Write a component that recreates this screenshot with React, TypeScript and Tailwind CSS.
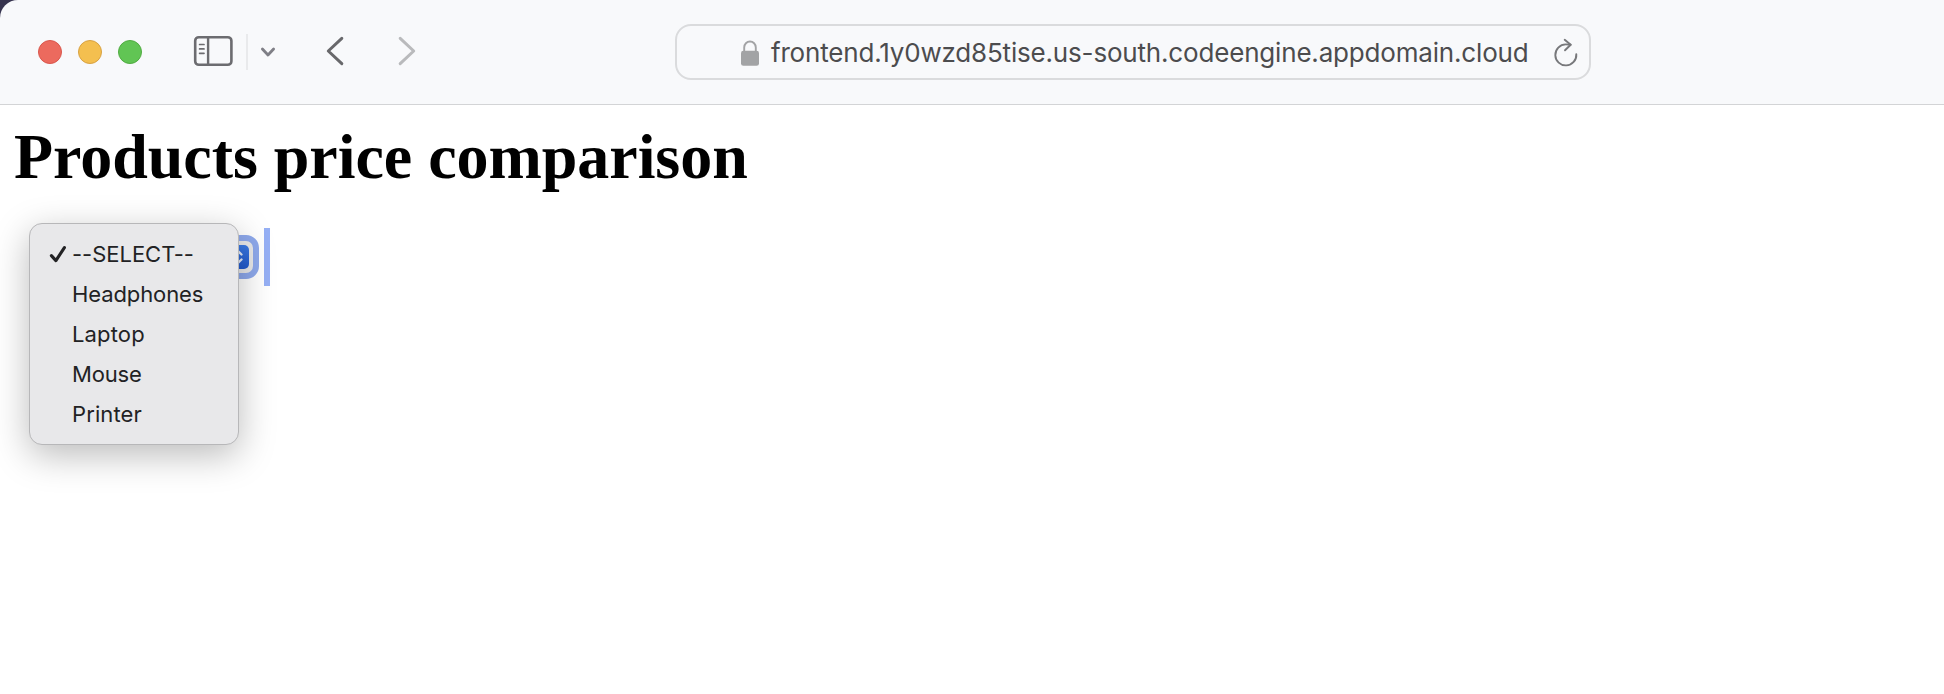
import React from "react";

type Option = { label: string; tracking: string };

const OPTIONS: Option[] = [
  { label: "--SELECT--", tracking: "tracking-[-0.02px]" },
  { label: "Headphones", tracking: "tracking-[-0.1px]" },
  { label: "Laptop", tracking: "tracking-[0.15px]" },
  { label: "Mouse", tracking: "tracking-[-0.2px]" },
  { label: "Printer", tracking: "tracking-[0.1px]" },
];

function WindowControls() {
  return (
    <div className="flex gap-4">
      <span className="size-6 rounded-full border border-[#d9574d] bg-[#ec6a5e]" />
      <span className="size-6 rounded-full border border-[#d8a243] bg-[#f4bf4f]" />
      <span className="size-6 rounded-full border border-[#51ac42] bg-[#61c554]" />
    </div>
  );
}

function SidebarIcon() {
  return (
    <svg className="mt-[-2px] ml-[51px] block" width="41" height="32" viewBox="0 0 41 32" fill="none" stroke="#6c6c70">
      <rect x="2.2" y="2.2" width="36.2" height="27.6" rx="3.6" strokeWidth="2.6" />
      <path d="M15.1 2.5V30" strokeWidth="2.4" />
      <path d="M6.6 9.5h4.4M6.6 13.9h4.4M6.6 18.3h4.4" strokeWidth="1.7" strokeLinecap="round" />
    </svg>
  );
}

function Toolbar() {
  return (
    <header className="flex h-[105px] items-start rounded-tl-[18px] border-b border-[#d3d4d6] bg-[#f8f9fb] pl-[38px]">
      <div className="flex h-[104px] items-center">
        <WindowControls />
        <SidebarIcon />
        <span className="ml-[12px] h-9 w-0.5 bg-[#e9eaec]" />
        <svg className="mt-[-1px] ml-[12px] block" width="16" height="12" viewBox="0 0 16 12" fill="none">
          <path d="M2.4 3 8 9l5.6-6" stroke="#7f7f86" strokeWidth="2.8" strokeLinecap="round" strokeLinejoin="round" />
        </svg>
        <svg className="ml-[49px] block" width="20" height="32" viewBox="0 0 20 32" fill="none">
          <path d="M16.8 2.3 3.3 15l13.5 12.7" stroke="#68686b" strokeWidth="3" strokeLinecap="round" strokeLinejoin="round" />
        </svg>
        <svg className="ml-[52px] block" width="20" height="32" viewBox="0 0 20 32" fill="none">
          <path d="M3.2 2.3 16.7 15 3.2 27.7" stroke="#b9babc" strokeWidth="3" strokeLinecap="round" strokeLinejoin="round" />
        </svg>
      </div>
      <div className="mt-6 ml-[258px] flex h-14 w-[916px] items-start rounded-[16px] border-2 border-[#dadbdd]">
        <svg className="mt-[14px] ml-[64px] block" width="18" height="27" viewBox="0 0 18 27" fill="none">
          <path d="M3.2 12V7.5a5.8 6 0 0 1 11.6 0V12" stroke="#a2a3a5" strokeWidth="1.9" />
          <rect x="0" y="10.8" width="18" height="15" rx="2.4" fill="#a2a3a5" />
        </svg>
        <span className="ml-[12px] w-[759px] whitespace-nowrap pt-[9px] font-['Inter',sans-serif] text-[26px] leading-[36px] tracking-[-0.18px] text-[#4c4c4e]">
          frontend.1y0wzd85tise.us-south.codeengine.appdomain.cloud
        </span>
        <svg className="mt-[11px] ml-[23px] block shrink-0" width="26" height="30" viewBox="0 0 26 30" fill="none" stroke="#77787b" strokeWidth="1.9" strokeLinecap="round" strokeLinejoin="round">
          <path d="M23.3 17.2A10.5 10.5 0 1 1 12.8 7.4c1.7 0 3.2 0 4.8.3" />
          <path d="m11.7 2.8 6 4.9-5.7 5.6" />
        </svg>
      </div>
    </header>
  );
}

function ClosedSelect() {
  return (
    <div className="ml-[30px] flex h-[58px] w-[240px] items-center justify-between border-r-[6px] border-[#96b0f5]">
      <div className="flex h-11 w-[229px] items-center justify-end rounded-[13px] border-[6px] border-[#8ea9ec] bg-[#e9e9ea] pr-1">
        <svg className="block" width="24" height="24" viewBox="0 0 24 24" fill="none">
          <defs>
            <linearGradient id="stepper" x1="0" y1="0" x2="0" y2="1">
              <stop offset="0" stopColor="#3a79e4" />
              <stop offset="1" stopColor="#2259cc" />
            </linearGradient>
          </defs>
          <rect width="24" height="24" rx="5" fill="url(#stepper)" />
          <path d="m8.5 9.5 4-3.8 4 3.8M8.5 14.5l4 3.8 4-3.8" stroke="#e5ecfb" strokeWidth="2.3" strokeLinecap="round" strokeLinejoin="round" />
        </svg>
      </div>
    </div>
  );
}

function OptionMenu() {
  return (
    <ul className="absolute top-[-5px] left-[29px] h-[222px] w-[210px] rounded-[13px] border border-[#b7b7b9] bg-[#e8e8ea] pt-[10px] shadow-[0_10px_36px_rgba(0,0,0,0.27)]">
      {OPTIONS.map((option, index) => (
        <li key={option.label} className="flex h-10 items-center pl-[19px] font-['Inter',sans-serif] text-[22px] leading-10 text-[#222224]">
          <span className="w-[23px]">
            {index === 0 && (
              <svg className="block" width="20" height="22" viewBox="0 0 20 22" fill="none">
                <path d="m2.4 12.6 4.5 5L15.4 4.6" stroke="#222224" strokeWidth="3.1" strokeLinecap="round" strokeLinejoin="round" />
              </svg>
            )}
          </span>
          <span className={option.tracking}>{option.label}</span>
        </li>
      ))}
    </ul>
  );
}

export default function App() {
  return (
    <div className="h-[694px] w-[1944px] overflow-hidden bg-white">
      <div className="bg-[linear-gradient(90deg,#37344f_0_40px,#f8f9fb_40px)]">
        <Toolbar />
      </div>
      <main>
        <h1 className="h-[123px] pt-[15px] pl-[14px] font-['Liberation_Serif',serif] text-[64px] leading-[74px] font-bold tracking-[-0.04px] whitespace-nowrap text-black">
          Products price comparison
        </h1>
        <div className="relative">
          <ClosedSelect />
          <OptionMenu />
        </div>
      </main>
    </div>
  );
}
